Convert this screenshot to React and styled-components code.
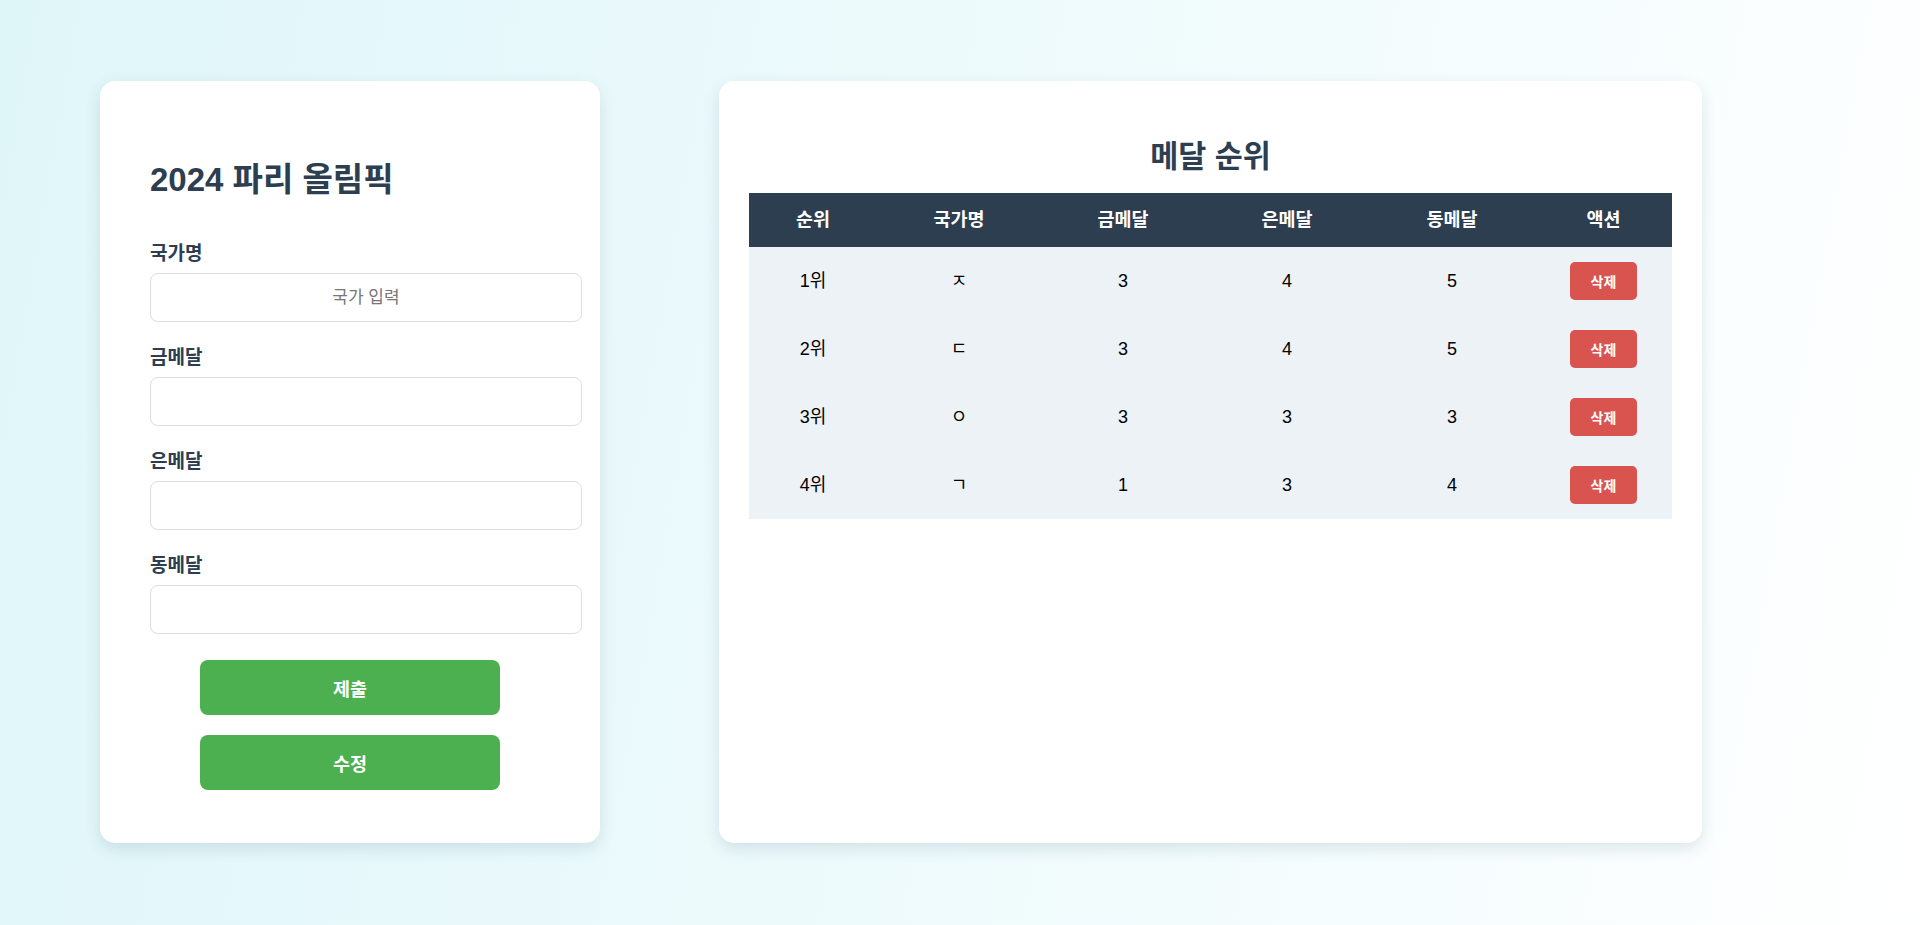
import React, { useState } from 'react'
import styled, { createGlobalStyle } from 'styled-components'

const GlobalStyle = createGlobalStyle`
  html, body {
    margin: 0;
    padding: 0;
  }
  body {
    font-family: "Liberation Sans", "Noto Sans CJK KR", sans-serif;
    background: linear-gradient(100deg, #dff6f9 0%, #f6fdfe 75%, #ffffff 100%);
    min-height: 100vh;
    color: #000;
  }
`

const initialRows = [
  { id: 1, country: 'ㅈ', gold: 3, silver: 4, bronze: 5 },
  { id: 2, country: 'ㄷ', gold: 3, silver: 4, bronze: 5 },
  { id: 3, country: 'ㅇ', gold: 3, silver: 3, bronze: 3 },
  { id: 4, country: 'ㄱ', gold: 1, silver: 3, bronze: 4 },
]

const fields = [
  { key: 'country', label: '국가명', placeholder: '국가 입력' },
  { key: 'gold', label: '금메달' },
  { key: 'silver', label: '은메달' },
  { key: 'bronze', label: '동메달' },
]

export default function App() {
  const [rows, setRows] = useState(initialRows)

  function removeRow(id) {
    setRows(rows.filter((r) => r.id !== id))
  }

  return (
    <>
      <GlobalStyle />
      <Page>
        <FormCard>
          <Title>2024 파리 올림픽</Title>
          {fields.map((f) => (
            <Group key={f.key}>
              <Label>{f.label}</Label>
              <Input placeholder={f.placeholder || ''} />
            </Group>
          ))}
          <Buttons>
            <GreenBtn>제출</GreenBtn>
            <GreenBtn>수정</GreenBtn>
          </Buttons>
        </FormCard>

        <TableCard>
          <SubTitle>메달 순위</SubTitle>
          <Table>
            <colgroup>
              <col style={{ width: 128 }} />
              <col style={{ width: 164 }} />
              <col style={{ width: 164 }} />
              <col style={{ width: 164 }} />
              <col style={{ width: 166 }} />
              <col style={{ width: 137 }} />
            </colgroup>
            <thead>
              <tr>
                <Th>순위</Th>
                <Th>국가명</Th>
                <Th>금메달</Th>
                <Th>은메달</Th>
                <Th>동메달</Th>
                <Th>액션</Th>
              </tr>
            </thead>
            <tbody>
              {rows.map((r, i) => (
                <tr key={r.id}>
                  <Td>{i + 1}위</Td>
                  <Td>{r.country}</Td>
                  <Td>{r.gold}</Td>
                  <Td>{r.silver}</Td>
                  <Td>{r.bronze}</Td>
                  <Td>
                    <DeleteBtn onClick={() => removeRow(r.id)}>삭제</DeleteBtn>
                  </Td>
                </tr>
              ))}
            </tbody>
          </Table>
        </TableCard>
      </Page>
    </>
  )
}

const Page = styled.div`
  display: flex;
  align-items: stretch;
  gap: 119px;
  padding: 81px 100px 82px;
  box-sizing: border-box;
`

const Card = styled.div`
  background: #fff;
  border-radius: 15px;
  box-shadow: 0 6px 16px rgba(0, 60, 70, 0.12);
`

const FormCard = styled(Card)`
  width: 500px;
  height: 762px;
  box-sizing: border-box;
  padding: 50px;
`

const TableCard = styled(Card)`
  width: 983px;
  height: 762px;
  box-sizing: border-box;
  padding: 30px;
`

const Title = styled.h1`
  font-size: 33px;
  line-height: 40px;
  height: 40px;
  font-weight: 700;
  color: #2c3e50;
  margin: 29px 0 44px;
`

const Group = styled.div`
  margin-bottom: 26px;
`

const Label = styled.label`
  display: block;
  font-size: 19px;
  line-height: 20px;
  height: 20px;
  font-weight: 700;
  color: #2c3e50;
  margin-bottom: 9px;
`

const Input = styled.input`
  display: block;
  box-sizing: border-box;
  width: 432px;
  height: 49px;
  padding: 0 15px;
  font-size: 17px;
  font-family: inherit;
  text-align: center;
  border: 1px solid #ddd;
  border-radius: 8px;
  background: #fff;
  outline: none;
  &::placeholder {
    color: #777;
  }
`

const Buttons = styled.div`
  display: flex;
  flex-direction: column;
  align-items: center;
  gap: 20px;
`

const GreenBtn = styled.button`
  width: 300px;
  height: 55px;
  border: none;
  border-radius: 8px;
  background: #4caf50;
  color: #fff;
  font-family: inherit;
  font-size: 18.5px;
  font-weight: 700;
  cursor: pointer;
`

const SubTitle = styled.h2`
  text-align: center;
  font-size: 30.5px;
  line-height: 36px;
  height: 36px;
  font-weight: 700;
  color: #2c3e50;
  margin: 27px 0 19px;
`

const Table = styled.table`
  width: 923px;
  border-collapse: collapse;
  table-layout: fixed;
  text-align: center;
`

const Th = styled.th`
  background: #2c3e50;
  color: #fff;
  font-size: 18.5px;
  font-weight: 700;
  line-height: 24px;
  height: 54px;
  box-sizing: border-box;
  padding: 0;
`

const Td = styled.td`
  background: #edf2f7;
  font-size: 18px;
  line-height: 38px;
  height: 68px;
  box-sizing: border-box;
  padding: 0;
  color: #000;
`

const DeleteBtn = styled.button`
  display: block;
  width: 67px;
  height: 38px;
  margin: 0 auto;
  padding: 0;
  border: none;
  border-radius: 5px;
  background: #d9534f;
  color: #fff;
  font-family: inherit;
  font-size: 14px;
  font-weight: 700;
  cursor: pointer;
`
